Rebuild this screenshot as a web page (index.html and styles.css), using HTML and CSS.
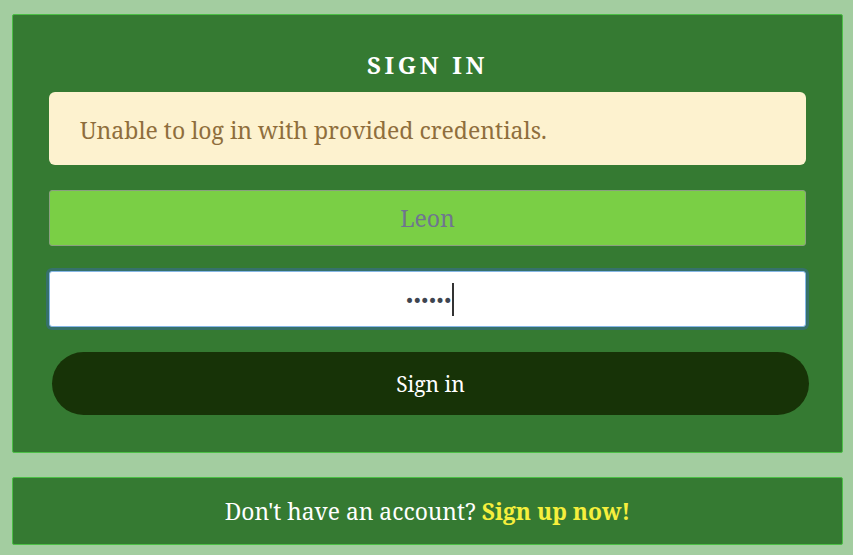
FILE: index.html
```html
<!DOCTYPE html>
<html>
<head>
<meta charset="utf-8">
<link rel="stylesheet" href="styles.css">
</head>
<body>
<main class="page">
  <section class="card">
    <h1 class="title">SIGN IN</h1>
    <div class="alert">Unable to log in with provided credentials.</div>
    <form class="form">
      <input class="field field-user" type="text" value="Leon">
      <div class="field field-pass"><span class="dots">••••••</span><span class="caret"></span></div>
      <button class="btn" type="button">Sign in</button>
    </form>
  </section>
  <section class="card footer">
    Don't have an account? <a class="link" href="#">Sign up now!</a>
  </section>
</main>
</body>
</html>
```
FILE: styles.css
```css
html, body { margin: 0; padding: 0; }
body {
  background: #a3cda0;
  font-family: "Noto Serif", "DejaVu Serif Condensed", "DejaVu Serif", serif;
  width: 853px;
  height: 555px;
  overflow: hidden;
}
.page {
  padding: 14px 10px 0 12px;
  display: flex;
  flex-direction: column;
  gap: 24px;
}
.card {
  background: #357a32;
  border: 1px solid #4cbf46;
  border-radius: 2px;
}
.card:first-child {
  padding: 0 36px;
  box-sizing: border-box;
  height: 439px;
}
.title {
  margin: 36px 0 0;
  text-align: center;
  color: #fff;
  font-size: 24px;
  font-weight: bold;
  letter-spacing: 3.6px;
  line-height: 28px;
}
.alert {
  margin-top: 13px;
  height: 73px;
  box-sizing: border-box;
  background: #fdf2cf;
  border-radius: 6px;
  color: #8f6e3c;
  font-size: 23px;
  display: flex;
  align-items: center;
  padding-left: 31px;
  padding-top: 2px;
}
.form {
  display: flex;
  flex-direction: column;
  margin-top: 25px;
}
.field {
  height: 56px;
  box-sizing: border-box;
  border-radius: 3px;
  font-family: inherit;
  font-size: 23px;
  text-align: center;
  width: 100%;
}
.field-user {
  background: #7acf45;
  border: 1px solid #8aa07f;
  color: #6f7590;
  padding: 0;
}
.field-pass {
  margin-top: 25px;
  background: #fff;
  border: 1px solid #86b7e6;
  box-shadow: 0 0 0 3px #36716a;
  display: flex;
  align-items: center;
  justify-content: center;
}
.dots {
  color: #3e4550;
  font-family: "DejaVu Sans", sans-serif;
  font-size: 17px;
  letter-spacing: -2.4px;
  margin-left: 4px;
  padding-top: 3px;
}
.caret {
  display: inline-block;
  width: 2px;
  height: 33px;
  background: #333;
  margin-left: 2px;
}
.btn {
  margin: 25px -3px 0 3px;
  height: 63px;
  border: none;
  border-radius: 32px;
  background: #173307;
  color: #fff;
  font-family: inherit;
  font-size: 21px;
}
.footer {
  height: 68px;
  box-sizing: border-box;
  display: flex;
  align-items: center;
  justify-content: center;
  color: #fff;
  font-size: 22.8px;
  gap: 6px;
}
.link {
  color: #f6ef3d;
  font-weight: bold;
  text-decoration: none;
}
```
